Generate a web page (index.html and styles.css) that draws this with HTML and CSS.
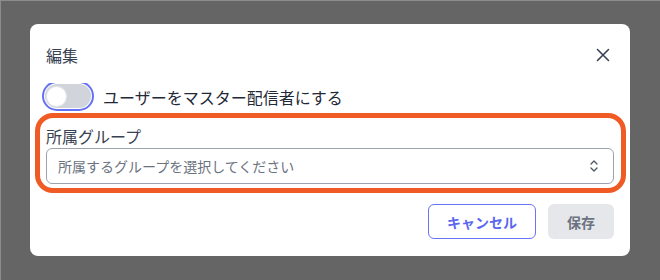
FILE: index.html
```html
<!DOCTYPE html>
<html lang="ja">
<head>
<meta charset="utf-8">
<link rel="stylesheet" href="styles.css">
</head>
<body>
<div class="overlay">
  <div class="dialog">
    <div class="dialog-header">
      <h2 class="dialog-title">編集</h2>
      <button class="close-btn" aria-label="閉じる">
        <svg width="16" height="16" viewBox="0 0 16 16"><path d="M2.5 2.5 L13.5 13.5 M13.5 2.5 L2.5 13.5" stroke="#374151" stroke-width="1.6" stroke-linecap="round" fill="none"/></svg>
      </button>
    </div>
    <div class="toggle-row">
      <div class="toggle-clip">
        <span class="toggle-track"><span class="toggle-knob"></span></span>
      </div>
      <span class="toggle-label">ユーザーをマスター配信者にする</span>
    </div>
    <div class="form-group">
      <label class="field-label">所属グループ</label>
      <div class="select">
        <span class="select-placeholder">所属するグループを選択してください</span>
        <svg class="select-icon" width="10" height="14" viewBox="0 0 10 14"><path d="M2 5 L5 2 L8 5 M2 9 L5 12 L8 9" stroke="#4b5563" stroke-width="1.3" fill="none" stroke-linecap="round" stroke-linejoin="round"/></svg>
      </div>
    </div>
    <div class="actions">
      <button class="btn btn-outline">キャンセル</button>
      <button class="btn btn-muted">保存</button>
    </div>
  </div>
</div>
</body>
</html>
```
FILE: styles.css
```css
html, body {
  margin: 0;
  padding: 0;
}
body {
  width: 660px;
  height: 280px;
  background: #656565;
  font-family: "Noto Sans CJK JP", "Noto Sans", sans-serif;
  overflow: hidden;
}
.overlay {
  box-sizing: border-box;
  width: 660px;
  height: 280px;
  border-top: 1px solid #8c8c8c;
  border-left: 1px solid #8c8c8c;
  padding: 23px 0 0 29px;
}
.dialog {
  box-sizing: border-box;
  width: 600px;
  height: 232px;
  background: #fff;
  border-radius: 8px;
  padding: 19px 16px 17px 16px;
  display: flex;
  flex-direction: column;
}
.dialog-header {
  display: flex;
  justify-content: space-between;
  align-items: center;
  height: 24px;
}
.dialog-title {
  margin: 0;
  font-size: 16px;
  font-weight: 400;
  color: #374151;
  line-height: 24px;
}
.close-btn {
  border: 0;
  background: none;
  padding: 0;
  margin-right: 3px;
  width: 16px;
  height: 16px;
  display: flex;
}
.toggle-row {
  margin-top: 16px;
  display: flex;
  align-items: center;
  height: 28px;
}
.toggle-clip {
  overflow: hidden;
  height: 28px;
  width: 56px;
  margin-left: -5px;
  display: flex;
  align-items: flex-end;
}
.toggle-track {
  margin: 0 0 3px 4px;
  width: 46px;
  height: 24px;
  border-radius: 12px;
  background: #d1d5db;
  box-shadow: 0 0 0 1px #fff, 0 0 0 3px #6470f5;
  display: flex;
  align-items: center;
  padding-left: 2px;
  box-sizing: border-box;
}
.toggle-knob {
  width: 19px;
  height: 19px;
  border-radius: 50%;
  background: #fff;
  box-shadow: 0 0 0 1px #e5e7eb;
}
.toggle-label {
  margin-left: 6px;
  font-size: 16px;
  color: #1f2937;
  line-height: 24px;
}
.form-group {
  position: relative;
  margin-top: 14px;
  display: flex;
  flex-direction: column;
}
.form-group::before {
  content: "";
  position: absolute;
  top: -12px;
  left: -11px;
  right: -12px;
  bottom: -9px;
  border: 5px solid #f05a24;
  border-radius: 18px;
  pointer-events: none;
}
.field-label {
  font-size: 16px;
  color: #374151;
  line-height: 22px;
}
.select {
  margin-top: 1px;
  box-sizing: border-box;
  height: 36px;
  border: 1px solid #9ca3af;
  border-radius: 6px;
  display: flex;
  align-items: center;
  justify-content: space-between;
  padding: 0 14px 0 11px;
}
.select-placeholder {
  font-size: 14px;
  color: #6b7280;
}
.actions {
  margin-top: 20px;
  display: flex;
  justify-content: flex-end;
  gap: 12px;
}
.btn {
  box-sizing: border-box;
  height: 35px;
  border-radius: 6px;
  font-family: "Noto Sans CJK JP", "Noto Sans", sans-serif;
  font-size: 14px;
  font-weight: 700;
  padding: 0;
}
.btn-outline {
  width: 108px;
  background: #fff;
  border: 1px solid #6b73f5;
  color: #5b67f0;
}
.btn-muted {
  width: 66px;
  background: #e5e7eb;
  border: 0;
  color: #6b7280;
}
```
